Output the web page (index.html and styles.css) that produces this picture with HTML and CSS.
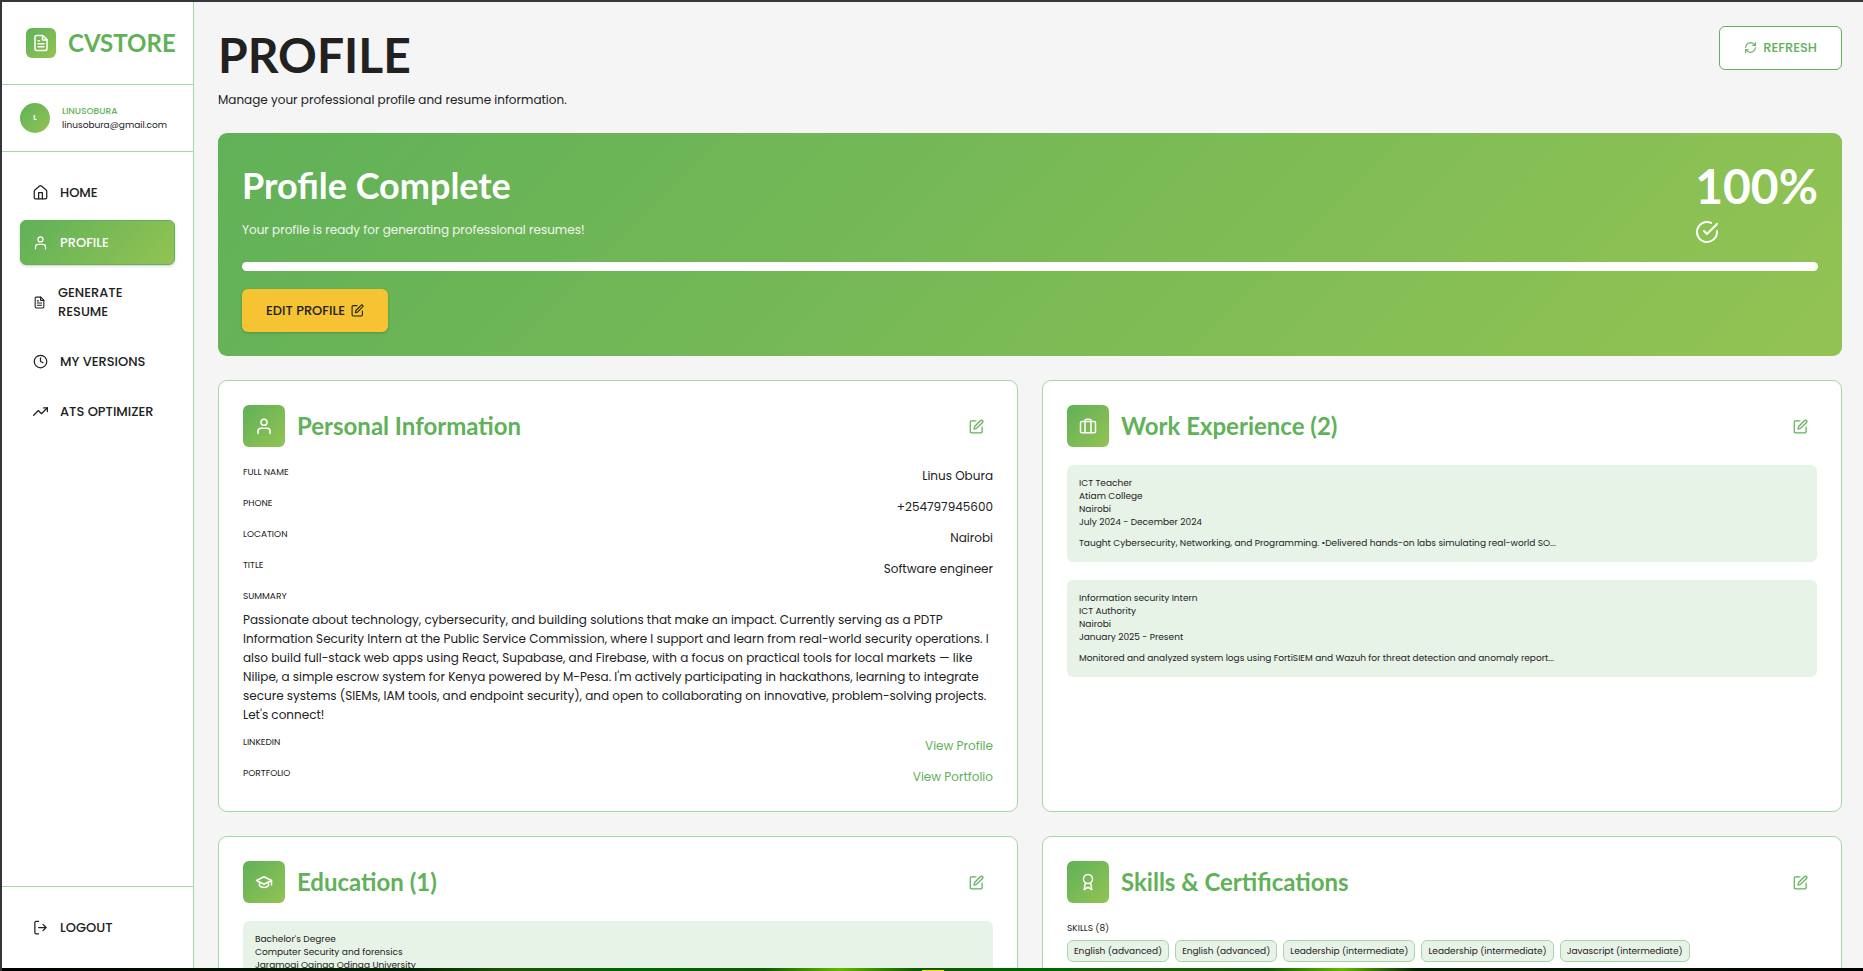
FILE: index.html
```
<!DOCTYPE html>
<html lang="en">
<head>
<meta charset="UTF-8" />
<meta name="viewport" content="width=device-width, initial-scale=1" />
<title>CVSTORE - Profile</title>
<link rel="stylesheet" href="styles.css">
</head>
<body>

<!-- Shared icons -->
<svg class="icon-defs" width="0" height="0" aria-hidden="true">
  <symbol id="i-file" viewBox="0 0 24 24"><path d="M14.5 2H6a2 2 0 0 0-2 2v16a2 2 0 0 0 2 2h12a2 2 0 0 0 2-2V7.5L14.5 2z"/><path d="M14 2v6h6M16 13H8M16 17H8M10 9H8"/></symbol>
  <symbol id="i-home" viewBox="0 0 24 24"><path d="M2 10a3 3 0 0 1 1-2l7-6a3 3 0 0 1 4 0l7 6a3 3 0 0 1 1 2v10a2 2 0 0 1-2 2H4a2 2 0 0 1-2-2z"/><path d="M9 22V12h6v10"/></symbol>
  <symbol id="i-user" viewBox="0 0 24 24"><path d="M20 22v-3a4 4 0 0 0-4-4H8a4 4 0 0 0-4 4v3"/><circle cx="12" cy="7" r="4"/></symbol>
  <symbol id="i-clock" viewBox="0 0 24 24"><circle cx="12" cy="12" r="10"/><path d="M12 6v6l4 2"/></symbol>
  <symbol id="i-trend" viewBox="0 0 24 24"><path d="M23 6l-9.500 9.500-5-5L1 18"/><path d="M17 6h6v6"/></symbol>
  <symbol id="i-logout" viewBox="0 0 24 24"><path d="M9 22H5a2 2 0 0 1-2-2V4a2 2 0 0 1 2-2h4"/><path d="M16 17l5-5-5-5M21 12H9"/></symbol>
  <symbol id="i-refresh" viewBox="0 0 24 24"><path d="M3 12a9 9 0 0 1 9-9 9.750 9.750 0 0 1 6.740 2.740L21 8"/><path d="M21 3v5h-5"/><path d="M21 12a9 9 0 0 1-9 9 9.750 9.750 0 0 1-6.740-2.740L3 16"/><path d="M8 16H3v5"/></symbol>
  <symbol id="i-edit" viewBox="0 0 24 24"><path d="M11 3H4a2 2 0 0 0-2 2v15a2 2 0 0 0 2 2h15a2 2 0 0 0 2-2v-7"/><path d="M18.500 2.500a2.121 2.121 0 0 1 3 3L12 15l-4 1 1-4z"/></symbol>
  <symbol id="i-check" viewBox="0 0 24 24"><path d="M22 11.080V12a10 10 0 1 1-5.930-9.140"/><path d="M22 4L12 14l-3-3"/></symbol>
  <symbol id="i-work" viewBox="0 0 24 24"><rect x="2" y="6" width="20" height="15" rx="2"/><path d="M16 21V5a2 2 0 0 0-2-2h-4a2 2 0 0 0-2 2v16"/></symbol>
  <symbol id="i-school" viewBox="0 0 24 24"><path d="M22 10L12 5 2 10l10 5z"/><path d="M6 12v5c3 3 9 3 12 0v-5M22 10v6"/></symbol>
  <symbol id="i-award" viewBox="0 0 24 24"><circle cx="12" cy="8" r="6"/><path d="M15.480 12.890L17 22l-5-3-5 3 1.520-9.110"/></symbol>
</svg>

<div class="layout">

  <aside class="sidebar">
    <div class="logo">
      <span class="logo-icon"><svg class="icon"><use href="#i-file"/></svg></span>
      <span class="logo-text">CVSTORE</span>
    </div>
    <div class="user">
      <span class="avatar">L</span>
      <div>
        <p class="user-name">LINUSOBURA</p>
        <p class="user-email">linusobura@gmail.com</p>
      </div>
    </div>
    <nav class="nav">
      <a href="#home"><svg class="icon"><use href="#i-home"/></svg>HOME</a>
      <a href="#profile" class="active"><svg class="icon"><use href="#i-user"/></svg>PROFILE</a>
      <a href="#generate" class="wrap"><svg class="icon"><use href="#i-file"/></svg>GENERATE RESUME</a>
      <a href="#versions"><svg class="icon"><use href="#i-clock"/></svg>MY VERSIONS</a>
      <a href="#ats"><svg class="icon"><use href="#i-trend"/></svg>ATS OPTIMIZER</a>
    </nav>
    <div class="logout">
      <button type="button"><svg class="icon"><use href="#i-logout"/></svg>LOGOUT</button>
    </div>
  </aside>

  <main>
    <header class="page-header">
      <div>
        <h1>PROFILE</h1>
        <p>Manage your professional profile and resume information.</p>
      </div>
      <button type="button" class="btn btn-outline"><svg class="icon"><use href="#i-refresh"/></svg>REFRESH</button>
    </header>

    <!-- Completion banner -->
    <section class="banner">
      <div class="banner-top">
        <div>
          <h2>Profile Complete</h2>
          <p>Your profile is ready for generating professional resumes!</p>
        </div>
        <div class="score">
          <strong>100%</strong>
          <svg class="icon"><use href="#i-check"/></svg>
        </div>
      </div>
      <div class="progress"><div class="progress-fill" style="width: 100%"></div></div>
      <button type="button" class="btn btn-yellow">EDIT PROFILE<svg class="icon"><use href="#i-edit"/></svg></button>
    </section>

    <div class="cards">

      <section class="card">
        <div class="card-head">
          <span class="card-icon"><svg class="icon"><use href="#i-user"/></svg></span>
          <h3>Personal Information</h3>
          <button type="button" class="edit" aria-label="Edit personal information"><svg class="icon"><use href="#i-edit"/></svg></button>
        </div>
        <dl class="info">
          <div class="row"><dt>FULL NAME</dt><dd>Linus Obura</dd></div>
          <div class="row"><dt>PHONE</dt><dd>+254797945600</dd></div>
          <div class="row"><dt>LOCATION</dt><dd>Nairobi</dd></div>
          <div class="row"><dt>TITLE</dt><dd>Software engineer</dd></div>
          <div class="summary">
            <dt>SUMMARY</dt>
            <dd>Passionate about technology, cybersecurity, and building solutions that make an impact. Currently serving as a PDTP Information Security Intern at the Public Service Commission, where I support and learn from real-world security operations. I also build full-stack web apps using React, Supabase, and Firebase, with a focus on practical tools for local markets — like Nilipe, a simple escrow system for Kenya powered by M-Pesa. I'm actively participating in hackathons, learning to integrate secure systems (SIEMs, IAM tools, and endpoint security), and open to collaborating on innovative, problem-solving projects. Let's connect!</dd>
          </div>
          <div class="row"><dt>LINKEDIN</dt><dd><a href="#linkedin">View Profile</a></dd></div>
          <div class="row"><dt>PORTFOLIO</dt><dd><a href="#portfolio">View Portfolio</a></dd></div>
        </dl>
      </section>

      <section class="card">
        <div class="card-head">
          <span class="card-icon"><svg class="icon"><use href="#i-work"/></svg></span>
          <h3>Work Experience (2)</h3>
          <button type="button" class="edit" aria-label="Edit work experience"><svg class="icon"><use href="#i-edit"/></svg></button>
        </div>
        <div class="entries">
          <article class="entry">
            <p>ICT Teacher</p>
            <p>Atiam College</p>
            <p>Nairobi</p>
            <p>July 2024 - December 2024</p>
            <p class="entry-text">Taught Cybersecurity, Networking, and Programming. •Delivered hands-on labs simulating real-world SO...</p>
          </article>
          <article class="entry">
            <p>Information security Intern</p>
            <p>ICT Authority</p>
            <p>Nairobi</p>
            <p>January 2025 - Present</p>
            <p class="entry-text">Monitored and analyzed system logs using FortiSIEM and Wazuh for threat detection and anomaly report...</p>
          </article>
        </div>
      </section>

      <section class="card">
        <div class="card-head">
          <span class="card-icon"><svg class="icon"><use href="#i-school"/></svg></span>
          <h3>Education (1)</h3>
          <button type="button" class="edit" aria-label="Edit education"><svg class="icon"><use href="#i-edit"/></svg></button>
        </div>
        <div class="entries">
          <article class="entry">
            <p>Bachelor's Degree</p>
            <p>Computer Security and forensics</p>
            <p>Jaramogi Oginga Odinga University</p>
          </article>
        </div>
      </section>

      <section class="card">
        <div class="card-head">
          <span class="card-icon"><svg class="icon"><use href="#i-award"/></svg></span>
          <h3>Skills &amp; Certifications</h3>
          <button type="button" class="edit" aria-label="Edit skills"><svg class="icon"><use href="#i-edit"/></svg></button>
        </div>
        <h4>SKILLS (8)</h4>
        <ul class="chips">
          <li>English (advanced)</li>
          <li>English (advanced)</li>
          <li>Leadership (intermediate)</li>
          <li>Leadership (intermediate)</li>
          <li>Javascript (intermediate)</li>
        </ul>
      </section>

    </div>
  </main>
</div>

<div class="bottom-strip"></div>

</body>
</html>
```
FILE: styles.css
```
/* Reset */
* {
  margin: 0; padding: 0; box-sizing: border-box;
}
:root {
  --green: #60b158;
  --lime: #93c353;
  --line: #a5d6a7;
  --mint: #e8f3e8;
  --dark: #212121;
  --gradient: linear-gradient(135deg, var(--green), var(--lime));
}
body {
  display: flex;
  flex-direction: column;
  height: 100vh;
  overflow: hidden;
  font-family: Poppins, Inter, sans-serif;
  font-size: 12px;
  color: var(--dark);
  background: #f5f5f5;
  border-top: 2px solid #37343b;
  border-left: 2px solid #37343b;
}
button {
  font: inherit;
  color: inherit;
  background: none;
  border: none;
  cursor: pointer;
}
a {
  color: var(--green);
  text-decoration: none;
}
h1, h2, h3, .logo-text, .score strong {
  font-family: Lato, sans-serif;
  font-weight: 700;
}
.icon-defs {
  position: absolute;
}
.icon {
  width: 15px;
  height: 15px;
  flex: none;
  fill: none;
  stroke: currentColor;
  stroke-width: 2;
  stroke-linecap: round;
  stroke-linejoin: round;
}
.layout {
  display: flex;
  flex: 1;
  min-height: 0;
}

/* Sidebar */
.sidebar {
  display: flex;
  flex-direction: column;
  flex: none;
  width: 192px;
  background: white;
  border-right: 1px solid var(--line);
}
.logo {
  display: flex;
  align-items: center;
  gap: 12px;
  padding: 26px 0 26px 24px;
  border-bottom: 1px solid var(--line);
}
.logo-icon {
  display: flex;
  align-items: center;
  justify-content: center;
  flex: none;
  width: 30px;
  height: 30px;
  border-radius: 6px;
  color: white;
  background: var(--gradient);
}
.logo-icon .icon {
  width: 18px;
  height: 18px;
}
.logo-text {
  font-size: 24px;
  line-height: 30px;
  color: var(--green);
}
.user {
  display: flex;
  align-items: center;
  gap: 12px;
  padding: 18px;
  border-bottom: 1px solid var(--line);
  font-size: 9px;
  line-height: 14px;
}
.avatar {
  display: flex;
  align-items: center;
  justify-content: center;
  flex: none;
  width: 30px;
  height: 30px;
  border-radius: 50%;
  font-size: 7px;
  font-weight: 700;
  color: white;
  background: var(--gradient);
}
.user-name {
  font-weight: 500;
  color: var(--green);
}
.nav {
  display: flex;
  flex-direction: column;
  flex: 1;
  gap: 5px;
  padding: 18px;
}
.nav a, .logout button {
  display: flex;
  align-items: center;
  gap: 12px;
  width: 100%;
  padding: 12px;
  border: 1px solid transparent;
  border-radius: 6px;
  font-size: 13px;
  font-weight: 500;
  line-height: 19px;
  text-align: left;
  color: var(--dark);
}
.nav .wrap {
  padding-right: 36px;
}
.nav .wrap .icon {
  width: 13px;
}
.nav .active {
  color: white;
  background: var(--gradient);
  border-color: var(--green);
  box-shadow: 0 1px 3px rgba(0,0,0,0.2);
}
.logout {
  padding: 18px;
  border-top: 1px solid var(--line);
}

/* Page */
main {
  flex: 1;
  min-width: 0;
  overflow: hidden;
  padding: 24px 21px 24px 24px;
}
.page-header {
  display: flex;
  justify-content: space-between;
  align-items: flex-start;
  margin-bottom: 23px;
}
h1 {
  font-size: 48px;
  line-height: 58px;
}
.page-header p {
  margin-top: 5px;
  line-height: 21px;
}
.btn {
  display: inline-flex;
  align-items: center;
  gap: 6px;
  padding: 12px 24px;
  border-radius: 6px;
  font-size: 13px;
  font-weight: 500;
  line-height: 19px;
}
.btn .icon {
  width: 13px;
  height: 13px;
}
.btn-outline {
  padding-top: 11px;
  border: 1px solid var(--green);
  color: var(--green);
  background: white;
}
.btn-yellow {
  color: var(--dark);
  background: #f6c433;
  box-shadow: 0 1px 3px rgba(0,0,0,0.2);
}

/* Banner */
.banner {
  padding: 24px;
  margin-bottom: 24px;
  border-radius: 9px;
  color: white;
  background: var(--gradient);
}
.banner-top {
  display: flex;
  justify-content: space-between;
  margin-bottom: 18px;
}
.banner h2 {
  font-size: 36px;
  line-height: 56px;
}
.banner p {
  margin-top: 6px;
  line-height: 22px;
  opacity: 0.9;
}
.score strong {
  display: block;
  font-size: 48px;
  line-height: 58px;
}
.score .icon {
  display: block;
  width: 24px;
  height: 24px;
  margin-top: 5px;
}
.progress {
  height: 9px;
  margin-bottom: 18px;
  border-radius: 5px;
  overflow: hidden;
  background: rgba(255,255,255,0.3);
}
.progress-fill {
  height: 100%;
  background: white;
}

/* Cards */
.cards {
  display: grid;
  grid-template-columns: 1fr 1fr;
  gap: 24px;
}
.card {
  padding: 24px;
  border: 1px solid var(--line);
  border-radius: 9px;
  background: white;
}
.card-head {
  display: flex;
  align-items: center;
  gap: 12px;
  margin-bottom: 18px;
}
.card-icon {
  display: flex;
  align-items: center;
  justify-content: center;
  width: 42px;
  height: 42px;
  border-radius: 6px;
  color: white;
  background: var(--gradient);
}
.card-icon .icon {
  width: 18px;
  height: 18px;
}
h3 {
  flex: 1;
  font-size: 24px;
  line-height: 36px;
  color: var(--green);
}
.edit {
  display: flex;
  padding: 9px;
  color: var(--green);
}
.info {
  display: flex;
  flex-direction: column;
  gap: 10px;
}
.row {
  display: flex;
  justify-content: space-between;
  line-height: 21px;
}
dt, h4 {
  font-size: 9px;
  font-weight: 400;
  line-height: 14px;
}
.summary dd {
  margin-top: 7px;
  line-height: 19px;
}
.summary {
  margin-bottom: 1px;
}
.entries {
  display: flex;
  flex-direction: column;
  gap: 18px;
}
.entry {
  padding: 12px;
  border-radius: 6px;
  font-size: 9px;
  line-height: 13px;
  background: var(--mint);
}
.entry-text {
  margin-top: 8px;
}
.chips {
  display: flex;
  flex-wrap: wrap;
  gap: 6px;
  margin-top: 5px;
  list-style: none;
}
.chips li {
  padding: 3px 6px;
  border: 1px solid var(--line);
  border-radius: 6px;
  font-size: 9px;
  line-height: 14px;
  background: var(--mint);
}

/* Strip under the window */
.bottom-strip {
  flex: none;
  height: 3px;
  background:
    linear-gradient(#fd0, #fd0) 50% 100% / 22px 1px no-repeat,
    linear-gradient(90deg, #000 0%, #020 22%, #1a5500 27%, #060 34%, #0b5c00 41%, #60bc00 45%, #0b5c00 49%, #060 56%, #1a6000 62%, #0b5c00 68%, #60bc00 72%, #020 76%, #000 100%);
}
```
